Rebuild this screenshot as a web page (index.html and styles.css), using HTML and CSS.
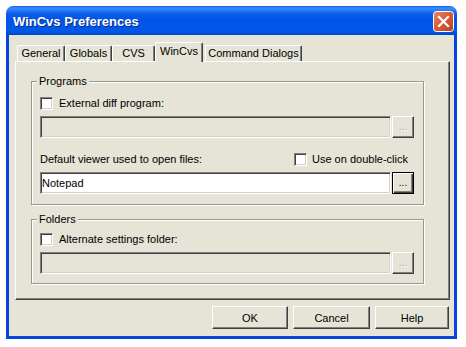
FILE: index.html
```html
<!DOCTYPE html>
<html>
<head>
<meta charset="utf-8">
<link rel="stylesheet" href="styles.css">
</head>
<body>
<div class="window">
  <div class="titlebar">
    <span class="title">WinCvs Preferences</span>
    <span class="close">
      <svg width="21" height="21" viewBox="0 0 21 21">
        <defs>
          <linearGradient id="cg" x1="0" y1="0" x2="1" y2="1">
            <stop offset="0" stop-color="#E8876A"/>
            <stop offset="0.5" stop-color="#D65A35"/>
            <stop offset="1" stop-color="#B8401F"/>
          </linearGradient>
        </defs>
        <rect x="0.5" y="0.5" width="20" height="20" rx="3" ry="3" fill="url(#cg)" stroke="#fff" stroke-width="1"/>
        <path d="M6 6 L15 15 M15 6 L6 15" stroke="#fff" stroke-width="2.2" stroke-linecap="square"/>
      </svg>
    </span>
  </div>
  <div class="client">
    <div class="tabs">
      <div class="tab tab-general">General</div>
      <div class="tab tab-globals">Globals</div>
      <div class="tab tab-cvs">CVS</div>
      <div class="tab tab-wincvs active">WinCvs</div>
      <div class="tab tab-cmd">Command Dialogs</div>
    </div>
    <div class="panel">
      <div class="group group-programs">
        <div class="group-title">Programs</div>
        <div class="check-row"><span class="checkbox"></span><span>External diff program:</span></div>
        <div class="field-row">
          <div class="field disabled"></div>
          <div class="browse disabled">...</div>
        </div>
        <div class="viewer-row">
          <span>Default viewer used to open files:</span>
          <span class="check-inline"><span class="checkbox"></span><span>Use on double-click</span></span>
        </div>
        <div class="field-row field-row-tight">
          <div class="field">Notepad</div>
          <div class="browse default">...</div>
        </div>
      </div>
      <div class="group group-folders">
        <div class="group-title">Folders</div>
        <div class="check-row"><span class="checkbox"></span><span>Alternate settings folder:</span></div>
        <div class="field-row">
          <div class="field disabled"></div>
          <div class="browse disabled">...</div>
        </div>
      </div>
    </div>
    <div class="buttons">
      <div class="btn btn-ok">OK</div>
      <div class="btn btn-cancel">Cancel</div>
      <div class="btn btn-help">Help</div>
    </div>
  </div>
</div>
</body>
</html>
```
FILE: styles.css
```css
* { box-sizing: border-box; }

body {
  margin: 0;
  background: #fff;
  font-family: "Liberation Sans", Arial, sans-serif;
  font-size: 11px;
  color: #000;
}

.window {
  margin: 6px 0 0 6px;
  width: 451px;
}

.titlebar {
  height: 29px;
  border-radius: 7px 7px 0 0;
  background: linear-gradient(to bottom,
    #0A5FEA 0px, #3C8EFF 2px, #2D7CF8 4px, #0B5DEB 8px,
    #0054E3 14px, #0058EA 22px, #0057E6 26px, #0046C8 29px);
  display: flex;
  align-items: center;
  justify-content: space-between;
  padding: 0 3px 0 7px;
}

.title {
  color: #fff;
  font-weight: bold;
  font-size: 13px;
  text-shadow: 1px 1px 0 #0A2A8A;
  margin-top: 1px;
}

.close {
  display: flex;
  width: 21px;
  height: 21px;
  margin-top: 2px;
}

.client {
  background: #E5E4D6;
  border: 3px solid #0645D9;
  border-top: 0;
  padding: 7px 0 7px 0;
}

.tabs {
  display: flex;
  align-items: flex-end;
  height: 19px;
  margin-left: 8px;
}

.tab {
  height: 16px;
  border-top: 1px solid #fff;
  border-left: 1px solid #fff;
  border-right: 1px solid #404040;
  box-shadow: inset -1px 0 0 #808080;
  border-radius: 2px 2px 0 0;
  display: flex;
  align-items: center;
  justify-content: center;
  line-height: 13px;
  background: #E5E4D6;
}

.tab-general { width: 48px; }
.tab-globals { width: 47px; }
.tab-cvs { width: 43px; }
.tab-wincvs { width: 48px; }
.tab-cmd { width: 97px; margin-left: 2px; }

.tab.active {
  height: 20px;
  margin-bottom: -1px;
  position: relative;
  z-index: 1;
  align-items: flex-start;
  padding-top: 2px;
}

.panel {
  margin-left: 6px;
  width: 435px;
  height: 239px;
  border-top: 1px solid #fff;
  border-left: 1px solid #fff;
  border-right: 1px solid #404040;
  border-bottom: 1px solid #404040;
  box-shadow: inset -1px -1px 0 #808080;
  padding: 19px 0 0 15px;
}

.group {
  width: 393px;
  border: 1px solid #9A998C;
  box-shadow: inset 1px 1px 0 #fff, 1px 1px 0 #fff;
  padding: 0 9px 0 8px;
}

.group-programs { height: 124px; }
.group-folders { height: 65px; margin-top: 14px; }

.group-title {
  width: fit-content;
  margin: -7px 0 0 -3px;
  padding: 0 2px;
  background: #E5E4D6;
  line-height: 13px;
}

.check-row {
  display: flex;
  align-items: center;
  gap: 6px;
  height: 13px;
  line-height: 13px;
  margin-top: 9px;
}

.group-folders .check-row { margin-top: 7px; }

.checkbox {
  display: block;
  width: 13px;
  height: 13px;
  background: #fff;
  border: 1px solid;
  border-color: #808080 #fff #fff #808080;
  box-shadow: inset 1px 1px 0 #404040, inset -1px -1px 0 #D4D0C8;
  flex: none;
}

.field-row {
  display: flex;
  gap: 1px;
  height: 22px;
  margin-top: 6px;
}

.field {
  flex: 1;
  height: 22px;
  border: 1px solid;
  border-color: #808080 #fff #fff #808080;
  box-shadow: inset 1px 1px 0 #404040, inset -1px -1px 0 #D4D0C8;
  background: #fff;
  display: flex;
  align-items: center;
  padding-left: 1px;
}

.field.disabled { background: #E5E4D6; }

.browse {
  width: 22px;
  height: 22px;
  flex: none;
  border: 1px solid;
  border-color: #fff #404040 #404040 #fff;
  box-shadow: inset -1px -1px 0 #808080;
  display: flex;
  align-items: center;
  justify-content: center;
  padding-bottom: 2px;
  font-size: 10px;
}

.browse.disabled {
  color: #A0A0A0;
  text-shadow: 1px 1px 0 #fff;
}

.browse.default {
  border: 1px solid #000;
  box-shadow: inset 1px 1px 0 #fff, inset -1px -1px 0 #404040, inset -2px -2px 0 #808080;
}

.viewer-row {
  display: flex;
  justify-content: space-between;
  align-items: center;
  height: 13px;
  line-height: 13px;
  margin-top: 15px;
  padding-right: 6px;
}

.check-inline {
  display: flex;
  align-items: center;
  gap: 5px;
}

.field-row-tight { margin-top: 6px; }

.buttons {
  display: flex;
  justify-content: flex-end;
  gap: 5px;
  margin: 6px 5px 0 0;
}

.btn {
  height: 23px;
  border: 1px solid;
  border-color: #fff #404040 #404040 #fff;
  box-shadow: inset -1px -1px 0 #808080;
  display: flex;
  align-items: center;
  justify-content: center;
}

.btn-ok { width: 76px; }
.btn-cancel { width: 77px; }
.btn-help { width: 74px; }
```
